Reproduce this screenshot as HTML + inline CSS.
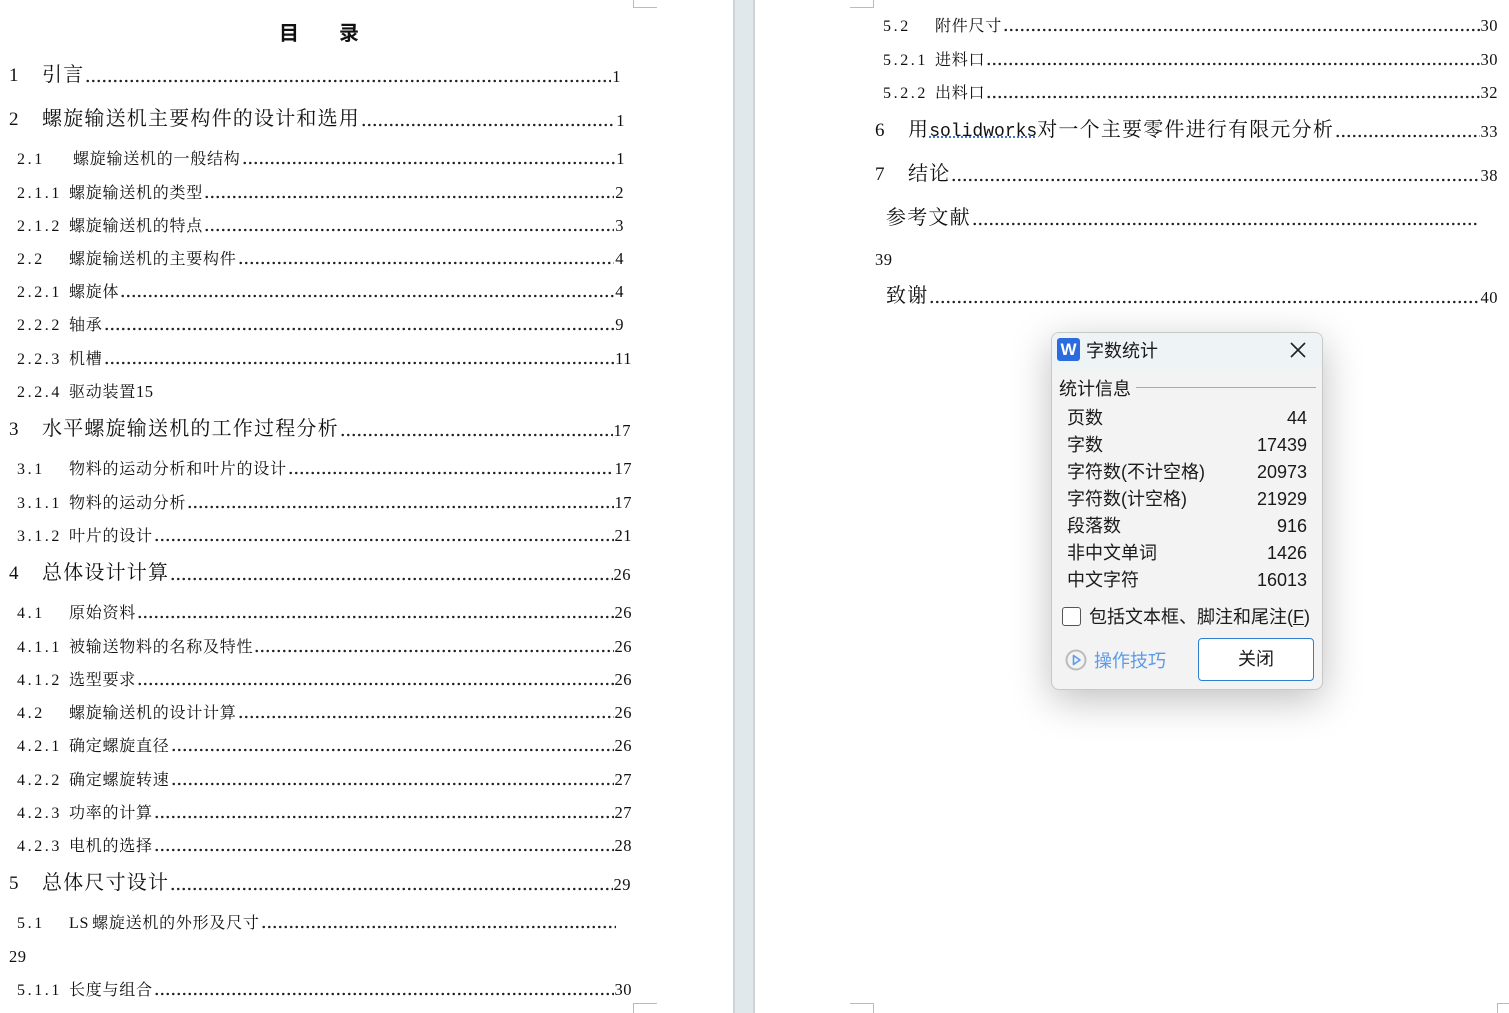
<!DOCTYPE html>
<html><head><meta charset="utf-8"><style>
*{margin:0;padding:0;box-sizing:border-box}
body{width:1509px;height:1013px;background:#fff;position:relative;overflow:hidden;font-family:"Liberation Serif","Noto Serif CJK SC",serif;color:#111}
.gap{position:absolute;left:733px;top:0;width:22px;height:1013px;background:#e1e8ec;border-left:2px solid #cdd3d7;border-right:2px solid #cdd3d7}
.cm{position:absolute;border-color:#bbb;border-style:solid;border-width:0}
.l{position:absolute;display:flex;align-items:flex-end;white-space:nowrap;height:24px}
.l .f{flex:1;height:10px;margin:0 1px 4px 1px;background-image:radial-gradient(circle,#222 1.1px,transparent 1.4px);background-size:5.5px 4px;background-repeat:repeat-x;background-position:0 6px}
.k{display:inline-block;overflow:hidden;flex:none}
.a{font-size:20px;letter-spacing:1.2px}
.a .k{font-size:19px;width:33px;letter-spacing:0}
.b{font-size:16px;letter-spacing:0.75px}
.b .k{font-size:16px;letter-spacing:2.6px}
.n{font-size:16.5px;letter-spacing:0.5px}
.t{position:absolute;white-space:nowrap}
.dlg{position:absolute;left:1051px;top:332px;width:272px;height:358px;background:#f3f3f3;border:1px solid #c8c8c8;border-radius:8px;box-shadow:0 10px 40px rgba(0,0,0,.25);font-family:"Liberation Sans","Noto Sans CJK SC",sans-serif;color:#1a1a1a;overflow:hidden}
.dlg .tb{position:absolute;left:0;top:0;width:100%;height:36px;background:#eef3f6}
.r{position:absolute;left:15px;width:240px;font-size:18px;height:26px;line-height:26px}
.r span{position:absolute;right:0}
</style></head><body>
<div class="gap"></div>
<div class="cm" style="left:633px;top:0;width:24px;height:8px;border-left-width:1px;border-bottom-width:1px"></div>
<div class="cm" style="left:850px;top:0;width:24px;height:8px;border-right-width:1px;border-bottom-width:1px"></div>
<div class="cm" style="left:633px;top:1003px;width:24px;height:10px;border-left-width:1px;border-top-width:1px"></div>
<div class="cm" style="left:850px;top:1003px;width:24px;height:10px;border-right-width:1px;border-top-width:1px"></div>
<div class="cm" style="left:1497px;top:1003px;width:12px;height:10px;border-left-width:1px;border-top-width:1px"></div>

<div class="t" style="left:279px;top:17px;font-size:20px;font-weight:bold;font-family:'Noto Sans CJK SC',sans-serif">目　　录</div>

<div class="l a" style="left:9px;top:63px;width:612px"><span class="k">1</span>引言<i class="f"></i><span class="n">1</span></div>
<div class="l a" style="left:9px;top:107px;width:616px"><span class="k">2</span>螺旋输送机主要构件的设计和选用<i class="f"></i><span class="n">1</span></div>
<div class="l b" style="left:17px;top:145px;width:608px"><span class="k" style="width:56px">2.1</span>螺旋输送机的一般结构<i class="f"></i><span class="n">1</span></div>
<div class="l b" style="left:17px;top:179px;width:607px"><span class="k" style="width:52px">2.1.1</span>螺旋输送机的类型<i class="f"></i><span class="n">2</span></div>
<div class="l b" style="left:17px;top:212px;width:607px"><span class="k" style="width:52px">2.1.2</span>螺旋输送机的特点<i class="f"></i><span class="n">3</span></div>
<div class="l b" style="left:17px;top:245px;width:607px"><span class="k" style="width:52px">2.2</span>螺旋输送机的主要构件<i class="f"></i><span class="n">4</span></div>
<div class="l b" style="left:17px;top:278px;width:607px"><span class="k" style="width:52px">2.2.1</span>螺旋体<i class="f"></i><span class="n">4</span></div>
<div class="l b" style="left:17px;top:311px;width:607px"><span class="k" style="width:52px">2.2.2</span>轴承<i class="f"></i><span class="n">9</span></div>
<div class="l b" style="left:17px;top:345px;width:615px"><span class="k" style="width:52px">2.2.3</span>机槽<i class="f"></i><span class="n">11</span></div>
<div class="l b" style="left:17px;top:378px;width:300px"><span class="k" style="width:52px">2.2.4</span>驱动装置 <span class="n">15</span></div>
<div class="l a" style="left:9px;top:417px;width:622px"><span class="k">3</span>水平螺旋输送机的工作过程分析<i class="f"></i><span class="n">17</span></div>
<div class="l b" style="left:17px;top:455px;width:615px"><span class="k" style="width:52px">3.1</span>物料的运动分析和叶片的设计<i class="f"></i><span class="n">17</span></div>
<div class="l b" style="left:17px;top:489px;width:615px"><span class="k" style="width:52px">3.1.1</span>物料的运动分析<i class="f"></i><span class="n">17</span></div>
<div class="l b" style="left:17px;top:522px;width:615px"><span class="k" style="width:52px">3.1.2</span>叶片的设计<i class="f"></i><span class="n">21</span></div>
<div class="l a" style="left:9px;top:561px;width:622px"><span class="k">4</span>总体设计计算<i class="f"></i><span class="n">26</span></div>
<div class="l b" style="left:17px;top:599px;width:615px"><span class="k" style="width:52px">4.1</span>原始资料<i class="f"></i><span class="n">26</span></div>
<div class="l b" style="left:17px;top:633px;width:615px"><span class="k" style="width:52px">4.1.1</span>被输送物料的名称及特性<i class="f"></i><span class="n">26</span></div>
<div class="l b" style="left:17px;top:666px;width:615px"><span class="k" style="width:52px">4.1.2</span>选型要求<i class="f"></i><span class="n">26</span></div>
<div class="l b" style="left:17px;top:699px;width:615px"><span class="k" style="width:52px">4.2</span>螺旋输送机的设计计算<i class="f"></i><span class="n">26</span></div>
<div class="l b" style="left:17px;top:732px;width:615px"><span class="k" style="width:52px">4.2.1</span>确定螺旋直径<i class="f"></i><span class="n">26</span></div>
<div class="l b" style="left:17px;top:766px;width:615px"><span class="k" style="width:52px">4.2.2</span>确定螺旋转速<i class="f"></i><span class="n">27</span></div>
<div class="l b" style="left:17px;top:799px;width:615px"><span class="k" style="width:52px">4.2.3</span>功率的计算<i class="f"></i><span class="n">27</span></div>
<div class="l b" style="left:17px;top:832px;width:615px"><span class="k" style="width:52px">4.2.3</span>电机的选择<i class="f"></i><span class="n">28</span></div>
<div class="l a" style="left:9px;top:871px;width:622px"><span class="k">5</span>总体尺寸设计<i class="f"></i><span class="n">29</span></div>
<div class="l b" style="left:17px;top:909px;width:600px"><span class="k" style="width:52px">5.1</span><span style="margin-right:3px">LS</span>螺旋送机的外形及尺寸<i class="f"></i></div>
<div class="l b" style="left:9px;top:943px;width:40px"><span class="n">29</span></div>
<div class="l b" style="left:17px;top:976px;width:615px"><span class="k" style="width:52px">5.1.1</span>长度与组合<i class="f"></i><span class="n">30</span></div>

<div class="l b" style="left:883px;top:12px;width:615px"><span class="k" style="width:52px">5.2</span>附件尺寸<i class="f"></i><span class="n">30</span></div>
<div class="l b" style="left:883px;top:46px;width:615px"><span class="k" style="width:52px">5.2.1</span>进料口<i class="f"></i><span class="n">30</span></div>
<div class="l b" style="left:883px;top:79px;width:615px"><span class="k" style="width:52px">5.2.2</span>出料口<i class="f"></i><span class="n">32</span></div>
<div class="l a" style="left:875px;top:118px;width:623px"><span class="k">6</span>用 <span style="text-decoration:underline dotted #3060c0;font-family:'Liberation Mono',monospace;font-size:18px;letter-spacing:0">solidworks</span> 对一个主要零件进行有限元分析<i class="f"></i><span class="n">33</span></div>
<div class="l a" style="left:875px;top:162px;width:623px"><span class="k">7</span>结论<i class="f"></i><span class="n">38</span></div>
<div class="l a" style="left:886px;top:206px;width:594px">参考文献<i class="f"></i></div>
<div class="l b" style="left:875px;top:246px;width:40px"><span class="n">39</span></div>
<div class="l a" style="left:886px;top:284px;width:612px">致谢<i class="f"></i><span class="n">40</span></div>

<div class="dlg">
 <div class="tb"></div>
 <div style="position:absolute;left:5px;top:5px;width:23px;height:23px;background:#2a6be0;border-radius:3px;color:#fff;font-weight:bold;font-size:17px;text-align:center;line-height:23px;font-family:'Liberation Sans',sans-serif">W</div>
 <div style="position:absolute;left:34px;top:4px;font-size:18px">字数统计</div>
 <svg style="position:absolute;left:238px;top:9px" width="16" height="16"><path d="M1 1L15 15M15 1L1 15" stroke="#222" stroke-width="1.6"/></svg>
 <div style="position:absolute;left:7px;top:42px;font-size:18px">统计信息</div>
 <div style="position:absolute;left:84px;top:54px;width:180px;height:1px;background:#aaa"></div>
 <div class="r" style="top:72px">页数<span>44</span></div>
 <div class="r" style="top:99px">字数<span>17439</span></div>
 <div class="r" style="top:126px">字符数(不计空格)<span>20973</span></div>
 <div class="r" style="top:153px">字符数(计空格)<span>21929</span></div>
 <div class="r" style="top:180px">段落数<span>916</span></div>
 <div class="r" style="top:207px">非中文单词<span>1426</span></div>
 <div class="r" style="top:234px">中文字符<span>16013</span></div>
 <div style="position:absolute;left:10px;top:274px;width:19px;height:19px;border:1.5px solid #555;border-radius:3px;background:#fff"></div>
 <div style="position:absolute;left:37px;top:270px;font-size:18px">包括文本框、脚注和尾注(<u>F</u>)</div>
 <svg style="position:absolute;left:13px;top:316px" width="22" height="22"><circle cx="11" cy="11" r="9.5" fill="#f3f3f3" stroke="#bbb" stroke-width="2"/><path d="M8.5 6.5L15 11L8.5 15.5Z" fill="none" stroke="#5a9be8" stroke-width="1.6" stroke-linejoin="round"/></svg>
 <div style="position:absolute;left:42px;top:314px;font-size:18px;color:#5b9be8">操作技巧</div>
 <div style="position:absolute;left:146px;top:305px;width:116px;height:43px;border:1px solid #2f7fd0;border-radius:4px;background:#fff;text-align:center;line-height:41px;font-size:18px">关闭</div>
</div>
</body></html>
